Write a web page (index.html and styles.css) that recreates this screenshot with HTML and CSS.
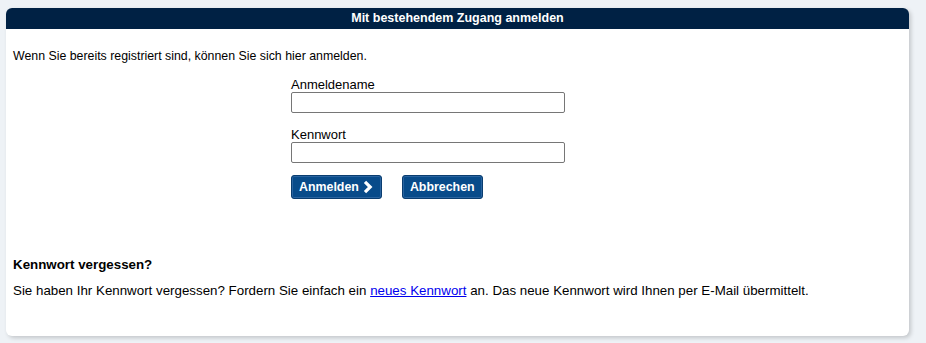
FILE: index.html
```html
<!DOCTYPE html>
<html lang="de">
<head>
<meta charset="utf-8">
<title>Anmelden</title>
<link rel="stylesheet" href="styles.css">
</head>
<body>
<div class="card">
  <div class="card-header">Mit bestehendem Zugang anmelden</div>
  <div class="card-body">
    <p class="intro">Wenn Sie bereits registriert sind, können Sie sich hier anmelden.</p>
    <form class="login-form">
      <label class="field">
        <span class="label">Anmeldename</span>
        <input class="input" type="text">
      </label>
      <label class="field">
        <span class="label">Kennwort</span>
        <input class="input" type="password">
      </label>
      <div class="actions">
        <button class="btn btn-next" type="button">Anmelden<svg class="chev" width="10" height="14" viewBox="0 0 10 14"><path d="M2 1.8 L7.2 7 L2 12.2" fill="none" stroke="#fff" stroke-width="3.2"/></svg></button>
        <button class="btn" type="button">Abbrechen</button>
      </div>
    </form>
    <h3 class="forgot-title">Kennwort vergessen?</h3>
    <p class="forgot-text">Sie haben Ihr Kennwort vergessen? Fordern Sie einfach ein <a href="#">neues Kennwort</a> an. Das neue Kennwort wird Ihnen per E-Mail übermittelt.</p>
  </div>
</div>
</body>
</html>
```

FILE: styles.css
```css
html, body {
  margin: 0;
  padding: 0;
  background: #eef2f6;
}
body {
  padding: 8px 17px 7px 6px;
  font-family: "Liberation Sans", Arial, sans-serif;
  font-size: 13px;
  color: #000;
}
.card {
  background: #fff;
  border-radius: 6px;
  overflow: hidden;
  box-shadow: 2px 2px 4px rgba(0, 0, 0, 0.18);
  height: 328px;
  box-sizing: border-box;
}
.card-header {
  background: #002144;
  color: #fff;
  font-weight: bold;
  font-size: 12.5px;
  text-align: center;
  height: 21px;
  line-height: 21px;
}
.card-body {
  padding: 0 7px;
}
.intro {
  margin: 0;
  padding-top: 20px;
  line-height: 15px;
  font-size: 12.35px;
}
.login-form {
  display: flex;
  flex-direction: column;
  margin-left: 278px;
  margin-top: 13px;
}
.field {
  display: flex;
  flex-direction: column;
  margin-bottom: 14px;
}
.label {
  line-height: 15px;
  height: 15px;
}
.input {
  width: 274px;
  height: 21px;
  box-sizing: border-box;
  border: 1px solid #767676;
  border-radius: 2px;
  margin: 0;
  padding: 0 3px;
  font: inherit;
}
.actions {
  display: flex;
  gap: 20px;
  margin-top: -2px;
}
.btn {
  display: flex;
  align-items: center;
  gap: 4px;
  height: 24px;
  box-sizing: border-box;
  padding: 0 7px;
  background: #084b8a;
  border: 1px solid #0a3d70;
  border-radius: 3px;
  box-shadow: inset 0 0 0 1px #2a64a0;
  color: #fff;
  font-family: "Liberation Sans", Arial, sans-serif;
  font-weight: bold;
  font-size: 12.4px;
}
.btn-next {
  padding-right: 8px;
}
.chev {
  display: block;
}
.forgot-title {
  margin: 58px 0 0;
  font-size: 13.33px;
  font-weight: bold;
  line-height: 15px;
}
.forgot-text {
  margin: 11px 0 0;
  line-height: 15px;
  font-size: 13.33px;
}
.forgot-text a {
  color: #0000ee;
}
```
